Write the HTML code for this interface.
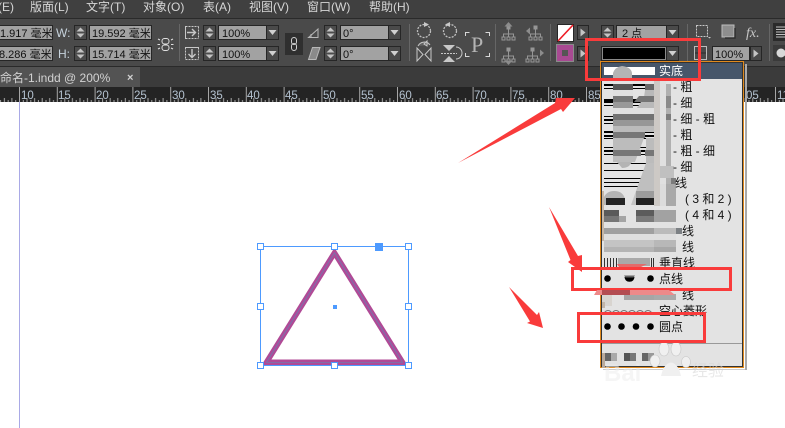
<!DOCTYPE html>
<html lang="zh">
<head>
<meta charset="utf-8">
<title>InDesign</title>
<style>
html,body{margin:0;padding:0;background:#fff;width:785px;height:428px;overflow:hidden}
svg{display:block;position:absolute;left:0;top:0}
text{font-family:"Liberation Sans","Noto Sans CJK SC",sans-serif}
.m{font-size:12px;fill:#d6d6d6}
.f{font-size:11px;fill:#111}
.r{font-size:11.5px;fill:#b4c2d0}
.l{font-size:12px;fill:#111}
</style>
</head>
<body>
<svg width="785" height="428" viewBox="0 0 785 428" xmlns="http://www.w3.org/2000/svg">
<defs>
<g id="sp">
<rect x=".5" y=".5" width="12" height="14" fill="#4c4c4c" stroke="#262626"/>
<path d="M6.500 2.500l4 4h-8zM6.500 12.500l4-4h-8z" fill="#c4c4c4"/>
</g>
<g id="dd">
<rect x=".5" y=".5" width="12" height="14" fill="#4a4a4a" stroke="#262626"/>
<path d="M2.500 5h8l-4 5z" fill="#d0d0d0"/>
</g>
<g id="ar">
<rect x=".5" y=".5" width="11" height="14" fill="#4a4a4a" stroke="#262626"/>
<path d="M3.500 3.500l5 4-5 4z" fill="#c4c4c4"/>
</g>
<g id="tree" fill="none" stroke="#969696">
<path d="M6.500 0v4M1.500 8V5h10v3M6.500 4v4"/>
<rect x="5" y="-3" width="3" height="3" fill="#969696"/>
<rect x="0" y="8" width="3" height="3"/><rect x="5" y="8" width="3" height="3"/><rect x="10" y="8" width="3" height="3"/>
</g>
<pattern id="tk" x="19" y="87" width="37.8" height="15" patternUnits="userSpaceOnUse">
<path d="M.5 0v15M8 11v4M15.600 11v4M23.200 11v4M30.700 11v4M4.300 13v2M11.800 13v2M19.400 13v2M27 13v2M34.500 13v2" stroke="#a6a6a6" stroke-width="1" fill="none"/>
</pattern>
</defs>

<!-- app chrome -->
<rect width="785" height="19" fill="#404040"/>
<rect y="19" width="785" height="48" fill="#4a4a4a"/>
<rect y="18" width="785" height="1" fill="#2a2a2a"/>
<rect y="66" width="785" height="1" fill="#2a2a2a"/>
<rect y="67" width="785" height="20" fill="#3b3b3b"/>
<rect y="67" width="140" height="20" fill="#535353"/>
<rect y="87" width="785" height="15" fill="#242424"/>
<rect y="87" width="785" height="15" fill="url(#tk)"/>
<rect y="102" width="785" height="326" fill="#fff"/>
<rect x="19" y="102" width="1" height="326" fill="#a9a9e6"/>

<!-- menu -->
<text class="m" x="-2" y="11">(E)</text>
<text class="m" x="30" y="11">版面(L)</text>
<text class="m" x="86" y="11">文字(T)</text>
<text class="m" x="143" y="11">对象(O)</text>
<text class="m" x="203" y="11">表(A)</text>
<text class="m" x="249" y="11">视图(V)</text>
<text class="m" x="307" y="11">窗口(W)</text>
<text class="m" x="369" y="11">帮助(H)</text>

<!-- X/Y -->
<rect x="-2" y="25.500" width="54.500" height="14" fill="#a2a2a2" stroke="#262626"/>
<rect x="-2" y="46.500" width="54.500" height="14" fill="#a2a2a2" stroke="#262626"/>
<text class="f" x="0" y="37">1.917 毫米</text>
<text class="f" x="-1" y="58">8.286 毫米</text>
<text x="56" y="37" font-size="12" fill="#c6d2dc">W:</text>
<text x="58" y="58" font-size="12" fill="#c6d2dc">H:</text>
<use href="#sp" x="74" y="25"/><use href="#sp" x="74" y="46"/>
<rect x="89.500" y="25.500" width="62" height="14" fill="#a2a2a2" stroke="#262626"/>
<rect x="89.500" y="46.500" width="62" height="14" fill="#a2a2a2" stroke="#262626"/>
<text class="f" x="92" y="37">19.592 毫米</text>
<text class="f" x="92" y="58">15.714 毫米</text>
<g fill="none" stroke="#e0e0e0" stroke-width="1">
<rect x="162" y="38.500" width="7" height="5.500" rx="2.500"/><rect x="162" y="45" width="7" height="5.500" rx="2.500"/>
<path d="M158 39l2 1M158 49l2-1M173 39l-2 1M173 49l-2-1M157.500 44.500h2.500M171 44.500h2.500"/>
</g>
<rect x="179" y="24" width="1" height="37" fill="#666"/>

<!-- scale -->
<g fill="none" stroke="#c8c8c8">
<path d="M185.500 26.500h13M185.500 38.500h13M198.500 26.500v12" stroke-dasharray="2 1"/>
<path d="M185.500 26v13" /><path d="M187 32.500h8M192 29l3.500 3.500L192 36" stroke-width="1.400"/>
<path d="M185.500 47.500v12M198.500 47.500v12M185.500 59.500h13" stroke-dasharray="2 1"/>
<path d="M185 47.500h14"/><path d="M192 49v8M188.500 54l3.500 3.500 3.500-3.500" stroke-width="1.400"/>
</g>
<use href="#sp" x="203" y="25"/><use href="#sp" x="203" y="46"/>
<rect x="218.500" y="25.500" width="48" height="14" fill="#a2a2a2" stroke="#262626"/>
<rect x="218.500" y="46.500" width="48" height="14" fill="#a2a2a2" stroke="#262626"/>
<text class="f" x="222" y="37">100%</text>
<text class="f" x="222" y="58">100%</text>
<use href="#dd" x="266" y="25"/><use href="#dd" x="266" y="46"/>
<rect x="285" y="33" width="18" height="22" fill="#2f2f2f"/>
<g fill="none" stroke="#d0d0d0" stroke-width="1"><rect x="291.500" y="37.500" width="5" height="7" rx="2.500"/><rect x="291.500" y="43.500" width="5" height="7" rx="2.500"/></g>

<!-- shear -->
<path d="M308.500 37.500L318 29v8.500zM311 37v-3" fill="none" stroke="#b8b8b8"/>
<path d="M308.500 59.500l4-12h7.500l-4 12z" fill="#8a8a8a" stroke="#b8b8b8"/>
<use href="#sp" x="324" y="25"/><use href="#sp" x="324" y="46"/>
<rect x="340.500" y="25.500" width="48" height="14" fill="#a2a2a2" stroke="#262626"/>
<rect x="340.500" y="46.500" width="48" height="14" fill="#a2a2a2" stroke="#262626"/>
<text class="f" x="343" y="37">0°</text>
<text class="f" x="343" y="58">0°</text>
<use href="#dd" x="388" y="25"/><use href="#dd" x="388" y="46"/>
<rect x="409" y="24" width="1" height="37" fill="#666"/>

<!-- rotate / flip -->
<g fill="none" stroke="#c0c0c0" stroke-width="1.300" stroke-dasharray="2 1.200">
<circle cx="424" cy="31" r="6.500"/><circle cx="450" cy="31" r="6.500"/>
</g>
<path d="M424 22l5 2.500-5 2.500zM450 22l-5 2.500 5 2.500z" fill="#c8c8c8"/>
<path d="M417 61v-13l6 6.500zM431 61v-13l-6 6.500z" fill="none" stroke="#c8c8c8"/>
<path d="M418 46a7 7 0 0 1 12-1M424 44l3-3v5z" fill="#c8c8c8" stroke="#c8c8c8" fill-opacity=".2"/>
<path d="M443 45h12l-6 6zM443 62h12l-6-6z" fill="#c8c8c8"/>
<path d="M441 53.500h16" stroke="#c8c8c8" stroke-dasharray="2 1"/>
<path d="M456 47a6 6 0 0 1 0 12" fill="none" stroke="#c8c8c8"/>
<path d="M465.500 36v-3.500h4M485.500 32.500h4v3.500M465.500 53v3.500h4M485.500 56.500h4v-3.500" fill="none" stroke="#d8d8d8"/>
<text x="471" y="52" font-size="22" fill="#b4b4b4" style='font-family:"Liberation Serif",serif'>P</text>
<rect x="495" y="24" width="1" height="37" fill="#666"/>

<!-- align tree -->
<use href="#tree" x="502" y="29"/><path d="M508.500 22l4 4.500h-8z" fill="#8c8c8c"/>
<use href="#tree" x="529" y="29"/><path d="M526 31l4-3.500v7z" fill="#8c8c8c"/>
<use href="#tree" x="502" y="51"/><path d="M508.500 65l4-4.500h-8z" fill="#8c8c8c"/>
<use href="#tree" x="526" y="51"/><path d="M544 53l-4-3.500v7z" fill="#8c8c8c"/>
<rect x="550" y="24" width="1" height="37" fill="#666"/>

<!-- stroke / fill -->
<rect x="557.500" y="24.500" width="16" height="17" fill="#fff" stroke="#262626"/>
<path d="M558 41L573 25" stroke="#ee1c25" stroke-width="1.600"/>
<use href="#ar" x="577" y="25"/>
<rect x="556.500" y="44.500" width="17" height="17" fill="#a84a92" stroke="#8a8a8a"/>
<rect x="562" y="50" width="6" height="6" fill="#555"/>
<use href="#ar" x="577" y="46"/>
<use href="#sp" x="601" y="25"/>
<rect x="616.500" y="25.500" width="50" height="14" fill="#a2a2a2" stroke="#262626"/>
<text class="f" x="622" y="37" font-size="12">2 点</text>
<use href="#dd" x="666" y="25"/>
<rect x="601.500" y="46.500" width="65" height="14" fill="#8a8a8a" stroke="#262626"/>
<rect x="603" y="48" width="62" height="11" fill="#000"/>
<use href="#dd" x="666" y="46"/>
<rect x="687" y="24" width="1" height="37" fill="#666"/>

<!-- right icons -->
<rect x="696.500" y="25.500" width="11" height="11" fill="none" stroke="#c8c8c8" stroke-dasharray="2 1"/>
<path d="M708 37l3 0-1.500 1.500z" fill="#c8c8c8"/>
<rect x="722" y="25" width="12" height="12" fill="#8e8e8e" stroke="#bdbdbd"/>
<path d="M735 28v10h-10" fill="none" stroke="#2e2e2e" stroke-width="1.500"/>
<text x="746" y="37" font-size="14" font-style="italic" fill="#c8c8c8" style='font-family:"Liberation Serif",serif'>fx.</text>
<rect x="769" y="24" width="1" height="37" fill="#666"/>
<rect x="694.500" y="46.500" width="12" height="13" fill="#4a4a4a" stroke="#bcbcbc"/>
<path d="M695 53h11M700.500 47v12" stroke="#2c2c2c"/>
<rect x="712.500" y="46.500" width="37" height="14" fill="#a2a2a2" stroke="#262626"/>
<text class="f" x="715" y="58">100%</text>
<use href="#ar" x="750" y="46"/>
<rect x="773" y="23" width="12" height="18" fill="#2b2b2b"/>
<path d="M776 27h9M776 29.500h9M776 32h9M776 34.500h9M776 37h9" stroke="#c0c0c0"/>
<rect x="773" y="45" width="12" height="16" fill="#3a3a3a"/>
<circle cx="781" cy="53" r="4.500" fill="#d8d8d8"/>

<!-- tab -->
<text x="0" y="82" font-size="12" fill="#d2d2d2">命名-1.indd @ 200%</text>
<text x="127" y="81" font-size="11" font-weight="bold" fill="#d2d2d2">×</text>

<!-- ruler numbers -->
<text class="r" x="21" y="99">10</text><text class="r" x="58" y="99">15</text><text class="r" x="96" y="99">20</text><text class="r" x="134" y="99">25</text><text class="r" x="172" y="99">30</text><text class="r" x="210" y="99">35</text><text class="r" x="247" y="99">40</text><text class="r" x="285" y="99">45</text><text class="r" x="323" y="99">50</text><text class="r" x="361" y="99">55</text><text class="r" x="399" y="99">60</text><text class="r" x="436" y="99">65</text><text class="r" x="474" y="99">70</text><text class="r" x="512" y="99">75</text><text class="r" x="550" y="99">80</text><text class="r" x="588" y="99">85</text><text class="r" x="746" y="99">05</text><text class="r" x="777" y="99">11</text>

<!-- triangle -->
<path d="M334.500 252.800L266.500 362.300h136z" fill="none" stroke="#b04a96" stroke-width="5.500" stroke-linejoin="miter"/>
<path d="M334.500 252.800L266.500 362.300h136z" fill="none" stroke="#6a7fb4" stroke-width=".7"/>
<rect x="260.500" y="246.500" width="148" height="119" fill="none" stroke="#4d9aff"/>
<g fill="#fff" stroke="#4d9aff">
<rect x="257.500" y="243.500" width="6" height="6"/><rect x="331.500" y="243.500" width="6" height="6"/><rect x="405.500" y="243.500" width="6" height="6"/>
<rect x="257.500" y="303.500" width="6" height="6"/><rect x="405.500" y="303.500" width="6" height="6"/>
<rect x="257.500" y="362.500" width="6" height="6"/><rect x="331.500" y="362.500" width="6" height="6"/><rect x="405.500" y="362.500" width="6" height="6"/>
</g>
<rect x="375" y="243" width="8" height="8" fill="#4d9aff"/>
<rect x="333" y="305" width="4" height="4" fill="#4d9aff"/>

<!-- dropdown -->
<rect x="745" y="64" width="2" height="306" fill="#aaa"/>
<rect x="603" y="369" width="142" height="1" fill="#ccc"/>
<rect x="600.500" y="61.500" width="143" height="306" fill="#e3e3e3" stroke="#e08a1e"/>
<rect x="601.500" y="62.500" width="141" height="304" fill="none" stroke="#333"/>
<rect x="602" y="63" width="140" height="16" fill="#46566a"/>
<rect x="604" y="67" width="51" height="8" fill="#fff"/>
<text x="659" y="75" font-size="12" fill="#fff">实底</text>

<!-- line samples -->
<g fill="#000">
<rect x="604" y="84" width="64" height="2"/><rect x="604" y="88" width="64" height="1"/>
<rect x="604" y="99" width="64" height="4"/><rect x="604" y="105" width="64" height="1"/>
<rect x="604" y="116" width="64" height="1"/><rect x="604" y="119" width="64" height="2"/><rect x="604" y="123" width="64" height="1"/>
<rect x="604" y="131" width="64" height="2"/><rect x="604" y="135" width="64" height="2"/><rect x="604" y="138" width="64" height="1"/>
<rect x="604" y="147" width="64" height="1"/><rect x="604" y="150" width="64" height="2"/><rect x="604" y="154" width="64" height="1"/>
<rect x="604" y="163" width="64" height="1"/><rect x="604" y="170" width="64" height="1"/>
<rect x="604" y="178" width="64" height="1"/><rect x="604" y="182" width="64" height="1"/><rect x="604" y="186" width="64" height="1"/>
</g>
<!-- mosaic blur -->
<path d="M613 80v-7q2-6 9-7 9 1 10 7v7z" fill="#b4b4b4"/>
<rect x="613" y="84" width="20" height="6" fill="#555"/><rect x="613" y="90" width="20" height="6" fill="#e0e0e0"/>
<rect x="613" y="96" width="20" height="6" fill="#777"/><rect x="613" y="102" width="20" height="6" fill="#999"/>
<rect x="613" y="108" width="41" height="6" fill="#e0e0e0"/>
<rect x="613" y="114" width="41" height="6" fill="#727272"/><rect x="613" y="120" width="41" height="6" fill="#979797"/>
<rect x="613" y="126" width="41" height="6" fill="#bbb"/><rect x="613" y="132" width="32" height="6" fill="#777"/>
<path d="M613 138h31l-9 24h-22z" fill="#bcbcbc"/>
<rect x="613" y="150" width="28" height="6" fill="#777"/>
<path d="M617 162h15l-3 4q-3 2-7 2z" fill="#b4b4b4"/>
<path d="M646 84h8v24h-17q4-6 7-11z" fill="#b9b9b9"/>
<rect x="645" y="84" width="9" height="6" fill="#666"/>
<path d="M634 102l5-6h15v6z" fill="#757575"/>
<path d="M646 138h8v26h-8z" fill="#bcbcbc"/>
<rect x="645" y="150" width="9" height="6" fill="#777"/>
<rect x="654" y="80" width="6" height="104" fill="#cdc9c5"/>
<rect x="660" y="80" width="6" height="104" fill="#e0e0e0"/>
<rect x="666" y="84" width="5" height="100" fill="#b0b0b0"/>
<rect x="666" y="96" width="5" height="12" fill="#8b8b8b"/>
<rect x="666" y="114" width="5" height="6" fill="#7c7c7c"/>
<rect x="660" y="166" width="14" height="12" fill="#c0c0c0"/>
<rect x="671" y="178" width="5" height="6" fill="#7c7c7c"/>
<path d="M646 163h8v28h-18z" fill="#bfbfbf"/>
<path d="M636 191l-5 14h5z" fill="#c4c4c4"/>
<rect x="602" y="191" width="2" height="50" fill="#c7b8a8"/>
<path d="M604 205v-8q3-6 10-6 9 0 11 8v6z" fill="#b4b4b4"/>
<rect x="606" y="198" width="19" height="7" fill="#242424"/>
<rect x="636" y="191" width="18" height="7" fill="#9c9c9c"/><rect x="636" y="198" width="18" height="7" fill="#222"/>
<rect x="654" y="184" width="6" height="22" fill="#cdc9c5"/><rect x="660" y="184" width="6" height="22" fill="#dcdcdc"/><rect x="666" y="184" width="10" height="22" fill="#a9a9a9"/>
<rect x="604" y="210" width="15" height="6" fill="#5a5a5a"/><rect x="604" y="216" width="15" height="6" fill="#767676"/><rect x="619" y="216" width="7" height="6" fill="#a4a4a4"/>
<rect x="636" y="210" width="18" height="6" fill="#5c5c5c"/><rect x="636" y="216" width="18" height="6" fill="#7a7a7a"/>
<rect x="654" y="210" width="22" height="12" fill="#a2a2a2"/>
<rect x="604" y="222" width="73" height="6" fill="#e2e2e2"/>
<rect x="604" y="228" width="50" height="6" fill="#a0a0a0"/><rect x="654" y="228" width="22" height="6" fill="#bbb"/>
<rect x="676" y="228" width="6" height="6" fill="#7c8084"/>
<rect x="604" y="234" width="72" height="6" fill="#dfdfdf"/>
<rect x="604" y="240" width="50" height="7" fill="#c4c4c4"/><rect x="654" y="240" width="22" height="7" fill="#b8b8b8"/>
<rect x="604" y="247" width="50" height="5" fill="#b4b4b4"/><rect x="654" y="247" width="22" height="5" fill="#a8a8a8"/>

<!-- labels -->
<text class="l" x="673" y="91">- 粗</text>
<text class="l" x="673" y="107">- 细</text>
<text class="l" x="673" y="123">- 细 - 粗</text>
<text class="l" x="673" y="139">- 粗</text>
<text class="l" x="673" y="155">- 粗 - 细</text>
<text class="l" x="673" y="171">- 细</text>
<text class="l" x="675" y="187">线</text>
<text class="l" x="685" y="203">( 3 和 2 )</text>
<text class="l" x="685" y="219">( 4 和 4 )</text>
<text class="l" x="682" y="235">线</text>
<text class="l" x="682" y="251">线</text>
<text class="l" x="659" y="267">垂直线</text>
<text class="l" x="659" y="283">点线</text>
<text class="l" x="682" y="299">线</text>
<text class="l" x="659" y="315">空心菱形</text>
<text class="l" x="659" y="331">圆点</text>

<!-- vertical line sample -->
<path d="M604.500 258v10M607.500 258v10M610.500 258v10M613.500 258v10M616.500 258v10M651.500 258v10M653.500 258v10" stroke="#333"/>
<rect x="618" y="258" width="32" height="8" fill="#a9a9a9"/>

<!-- dots -->
<g fill="#000">
<circle cx="607.500" cy="278.500" r="3.300"/><circle cx="650.500" cy="278.500" r="3.300"/>
<path d="M624.500 277h10q-.5 4.800-5 4.800T624.500 277z"/>
<circle cx="607.500" cy="326.500" r="3.300"/><circle cx="621.500" cy="326.500" r="3.300"/><circle cx="636" cy="326.500" r="3.300"/><circle cx="650.500" cy="326.500" r="3.300"/>
</g>
<path d="M624 275.500h11l-1.500 2h-8z" fill="#666"/>
<!-- mosaic 295 row -->
<rect x="602" y="294" width="10" height="12" fill="#d8d4cf"/>
<rect x="624" y="294" width="30" height="6" fill="#a6a6a6"/><rect x="654" y="294" width="22" height="6" fill="#aaa"/>
<rect x="602" y="302" width="3" height="6" fill="#c2b5a8"/>
<!-- hollow shapes -->
<path d="M604 313q4-5 8 0q4-5 8 0q4-5 8 0q4-5 8 0q4-5 8 0q4-5 8 0" fill="none" stroke="#777"/>

<!-- separator + footer -->
<rect x="602" y="343" width="140" height="1" fill="#999"/>
<rect x="602" y="353" width="3" height="15" fill="#b9aa9c"/><rect x="605" y="353" width="6" height="8" fill="#666"/><rect x="611" y="353" width="6" height="8" fill="#aaa"/>
<rect x="624" y="353" width="6" height="8" fill="#555"/><rect x="630" y="353" width="6" height="8" fill="#777"/>
<rect x="642" y="353" width="6" height="8" fill="#666"/><rect x="648" y="353" width="6" height="8" fill="#999"/>
<g fill="#f0f0f0" stroke="#c8c8c8" stroke-width=".6">
<ellipse cx="664" cy="349" rx="5" ry="7"/><ellipse cx="676" cy="349" rx="5" ry="7"/><ellipse cx="655" cy="361" rx="5" ry="6"/><ellipse cx="686" cy="362" rx="4.500" ry="5.500"/>
<path d="M663 369q8-13 16 0l2 7h-20z" stroke="none"/>
</g>
<text x="604" y="381" font-size="24" font-weight="bold" fill="#eeeeee" opacity=".55">Bai</text>
<text x="692" y="376" font-size="16" fill="#d8d8d8" opacity=".6">经验</text>

<!-- red annotation boxes -->
<g fill="none" stroke="#f93b3b" stroke-width="3">
<rect x="586.500" y="39.500" width="113" height="40"/>
<rect x="572.500" y="268.500" width="158" height="21"/>
<rect x="578.500" y="313.500" width="126" height="28"/>
</g>
<!-- pink overlay remnants of annotation -->
<path d="M617 264h30l-6 3h-22z" fill="#e36a6a"/>
<path d="M594 295l3-5h72l6 5z" fill="#ed8a8a"/>
<rect x="602" y="290" width="28" height="5" fill="#b34d52"/>

<!-- arrows -->
<g fill="#f93b3b">
<path d="M458 163L555 103 556 98 575 98 563 112 561 109z"/>
<path d="M549 207L578 256 582 255 582 272 568 262 570.500 260z"/>
<path d="M509 287L537 315 539 312 543 328 527 323 530 321.500z"/>
</g>
</svg>
</body>
</html>
